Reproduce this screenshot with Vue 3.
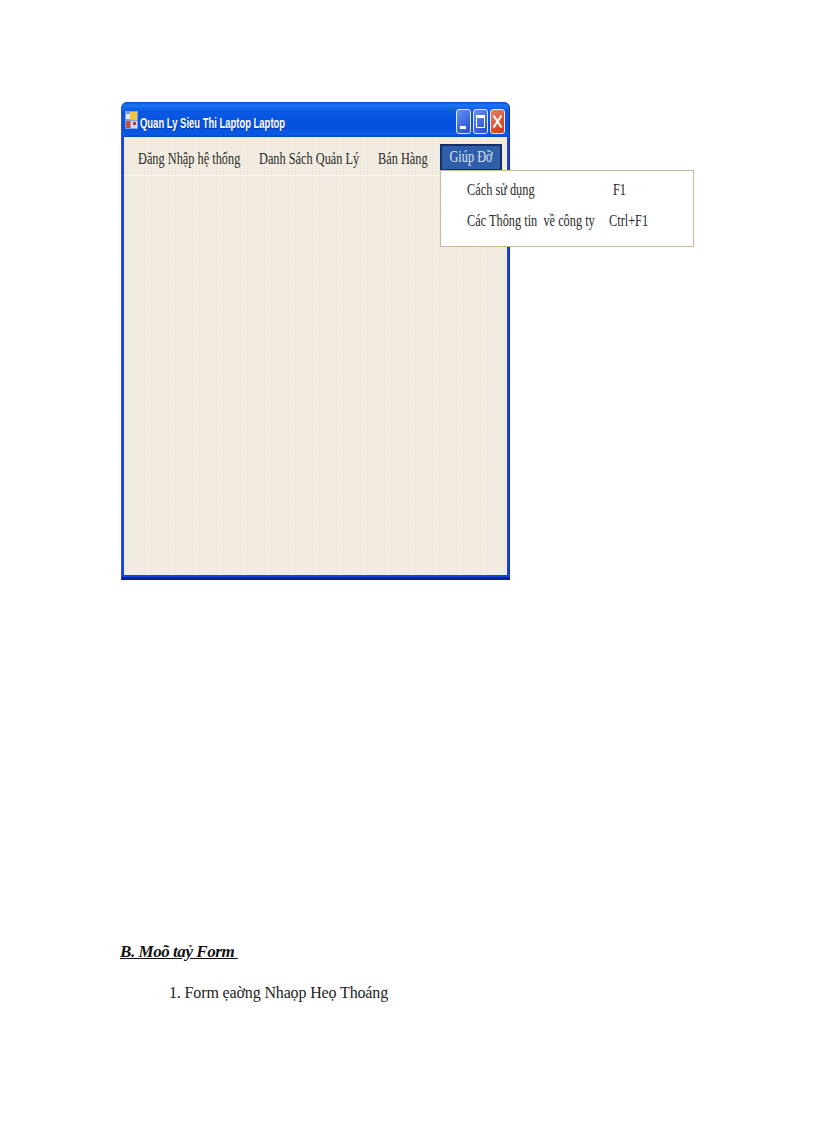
<script setup>
const menus = [
  { label: 'Đăng Nhập hệ thống', width: 102, active: false },
  { label: 'Danh Sách Quản Lý', width: 100, active: false },
  { label: 'Bán Hàng', width: 50, active: false },
  { label: 'Giúp Đỡ', width: 62, active: true },
]
const items = [
  { label: 'Cách sử dụng', key: 'F1' },
  { label: 'Các Thông tin  về công ty', key: 'Ctrl+F1' },
]
</script>

<template>
  <div class="page">
    <div class="window">
      <div class="titlebar">
        <svg class="app-icon" width="13" height="18" viewBox="0 0 13 18">
          <rect x="0" y="0" width="13" height="18" fill="#7f9fe0" />
          <rect x="5" y="1" width="7" height="8" fill="#f2c640" />
          <rect x="1" y="3" width="4" height="5" fill="#e8e8f0" />
          <rect x="1" y="10" width="4" height="7" fill="#c8503c" />
          <rect x="6" y="10" width="6" height="7" fill="#d6d8e8" />
          <rect x="8" y="11" width="3" height="3" fill="#c0392b" />
        </svg>
        <span class="title">Quan Ly Sieu Thi Laptop Laptop</span>
        <div class="controls">
          <div class="ctl ctl-blue"><span class="glyph-min"></span></div>
          <div class="ctl ctl-blue"><span class="glyph-max"></span></div>
          <div class="ctl ctl-red"><svg width="11" height="15" viewBox="0 0 11 15"><path d="M1.5 1.5 L9.5 13.5 M9.5 1.5 L1.5 13.5" stroke="#fff" stroke-width="2.2" fill="none" /></svg></div>
        </div>
      </div>
      <div class="client">
        <div class="menubar">
          <div
            v-for="m in menus"
            :key="m.label"
            class="menu"
            :class="{ active: m.active }"
            :style="{ width: m.width + 'px' }"
          >
            <span class="menu-text">{{ m.label }}</span>
          </div>
        </div>
      </div>
      <div class="dropdown">
        <div v-for="it in items" :key="it.label" class="drop-row">
          <span class="drop-label"><span class="squeeze">{{ it.label }}</span></span>
          <span class="drop-key"><span class="squeeze">{{ it.key }}</span></span>
        </div>
      </div>
    </div>

    <h2 class="heading">B. Moõ taỷ Form&nbsp;</h2>
    <p class="item">1. Form ẹaờng Nhaọp Heọ Thoáng</p>
  </div>
</template>

<style scoped>
.page {
  width: 816px;
  height: 1123px;
  box-sizing: border-box;
  padding: 102px 0 0 121px;
  background: #fff;
  overflow: hidden;
  font-family: "Liberation Serif", serif;
  color: #1a1a1a;
}
.window {
  position: relative;
  width: 389px;
  height: 478px;
  box-sizing: border-box;
  display: flex;
  flex-direction: column;
  background: #1244e8;
  border-radius: 6px 6px 0 0;
  border-bottom: 3px solid #0a1f9a;
  border-left: 1px solid #3a55a8;
  border-right: 1px solid #1a2f98;
}
.titlebar {
  height: 35px;
  flex: none;
  display: flex;
  align-items: center;
  padding: 0 4px 0 3px;
  border-radius: 6px 6px 0 0;
  background: linear-gradient(#0a48d4 0, #1a74f0 8%, #0a58e4 28%, #0450dc 70%, #0a5ae6 92%, #0a48c8 100%);
}
.app-icon {
  flex: none;
  margin-top: 1px;
}
.title {
  margin-left: 2px;
  margin-top: 5px;
  font: bold 15px "Liberation Sans", sans-serif;
  color: #fff;
  white-space: nowrap;
  display: inline-block;
  transform: scaleX(0.63);
  transform-origin: left center;
  text-shadow: 1px 1px 0 #0a3aa0;
}
.controls {
  margin-left: auto;
  display: flex;
  gap: 2px;
  margin-top: 4px;
}
.ctl {
  width: 15px;
  height: 25px;
  box-sizing: border-box;
  border: 1px solid #dfe8fa;
  border-radius: 3px;
  display: flex;
  align-items: center;
  justify-content: center;
  position: relative;
}
.ctl-blue { background: linear-gradient(135deg, #6a92ee, #3560dc 70%, #2a4cc8); }
.ctl-red { background: linear-gradient(135deg, #e88468, #d84a20 70%, #c83c14); }
.glyph-min {
  position: absolute;
  left: 3px;
  bottom: 4px;
  width: 6px;
  height: 3px;
  background: #fff;
}
.glyph-max {
  width: 9px;
  height: 13px;
  box-sizing: border-box;
  border: 1px solid #fff;
  border-top-width: 3px;
}
.client {
  flex: 1;
  margin: 0 2px 2px;
  background-color: #efeae0;
  background-image: repeating-conic-gradient(#f6eeda 0 25%, #e9e8e6 0 50%);
  background-size: 3px 3px;
}
.menubar {
  height: 39px;
  box-sizing: border-box;
  display: flex;
  align-items: center;
  padding: 5px 0 0 14px;
  border-bottom: 1px solid #f8f6ee;
  gap: 19px;
}
.menu {
  flex: none;
}
.menu-text {
  display: inline-block;
  font-size: 16px;
  white-space: nowrap;
  color: #2a2a2a;
  transform: scaleX(0.77);
  transform-origin: left center;
}
.menu.active {
  height: 27px;
  box-sizing: border-box;
  margin: -3px 0 0 -7px;
  border: 2px solid #14306a;
  background: #2f5fa8;
  display: flex;
  align-items: center;
  justify-content: center;
}
.menu.active .menu-text {
  color: #d8e2f2;
  transform-origin: center;
}
.dropdown {
  position: absolute;
  left: 318px;
  top: 68px;
  width: 254px;
  height: 77px;
  box-sizing: border-box;
  padding: 8px 0 0 26px;
  background: #fff;
  border: 1px solid #c8b898;
  display: flex;
  flex-direction: column;
  gap: 9px;
}
.drop-row {
  height: 22px;
  display: flex;
  align-items: center;
  font-size: 16px;
  white-space: pre;
  color: #2a2a2a;
}
.drop-label {
  width: 142px;
  flex: none;
}
.squeeze {
  display: inline-block;
  transform: scaleX(0.77);
  transform-origin: left center;
}
.drop-row:first-child .drop-key {
  margin-left: 4px;
}
.heading {
  margin: 362px 0 0 -1px;
  font-size: 17px;
  line-height: 20px;
  font-weight: bold;
  font-style: italic;
  text-decoration: underline;
  letter-spacing: -0.45px;
  color: #111;
}
.item {
  margin: 21px 0 0 48px;
  font-size: 16px;
  line-height: 20px;
  letter-spacing: -0.14px;
  color: #222;
}
</style>
